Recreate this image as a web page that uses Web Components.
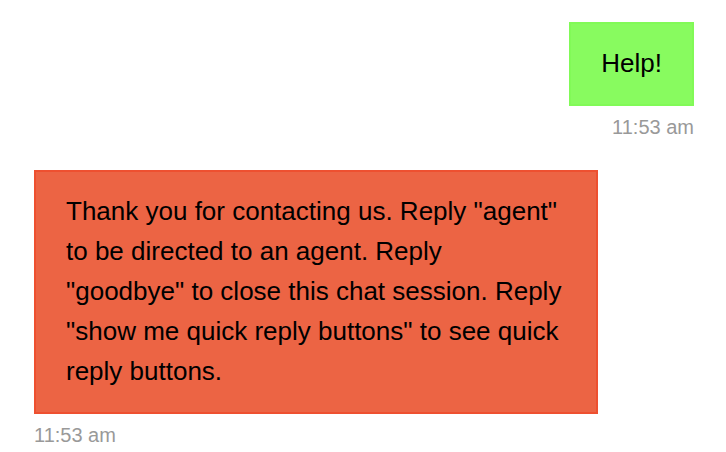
<!DOCTYPE html>
<html lang="en">
<head>
<meta charset="utf-8">
<title>Chat</title>
<style>
body { margin: 0; background: #fff; color: #000; font-family: "Liberation Sans", Arial, sans-serif; }
</style>
</head>
<body>
<chat-log>
<chat-message from="customer" time="11:53 am">Help!</chat-message>
<chat-message from="agent" time="11:53 am">Thank you for contacting us. Reply "agent" to be directed to an agent. Reply "goodbye" to close this chat session. Reply "show me quick reply buttons" to see quick reply buttons.</chat-message>
</chat-log>
<script>
class ChatLog extends HTMLElement {
  constructor() {
    super();
    this.attachShadow({ mode: "open" }).innerHTML = `
      <style>
        :host { display: block; }
        main { display: flex; flex-direction: column; gap: 30px; padding: 22px 32px 0 34px; }
      </style>
      <main role="log"><slot></slot></main>`;
  }
}
class ChatMessage extends HTMLElement {
  constructor() {
    super();
    this.attachShadow({ mode: "open" }).innerHTML = `
      <style>
        :host { display: flex; flex-direction: column; align-items: flex-start; }
        :host([from="customer"]) { align-items: flex-end; }
        .bubble {
          box-sizing: border-box; max-width: 564px; margin: 0; padding: 19px 30px 21px;
          border: 2px solid #ee5030; background: #ec6444;
          font-size: 26px; line-height: 40px;
        }
        :host([from="customer"]) .bubble { border-color: #81fa57; background: #88fb5f; }
        time { margin-top: 8px; color: #999; font-size: 20px; line-height: 26px; }
      </style>
      <p class="bubble"><slot></slot></p>
      <time></time>`;
  }
  connectedCallback() {
    this.shadowRoot.querySelector("time").textContent = this.getAttribute("time");
  }
}
customElements.define("chat-message", ChatMessage);
customElements.define("chat-log", ChatLog);
</script>
</body>
</html>
